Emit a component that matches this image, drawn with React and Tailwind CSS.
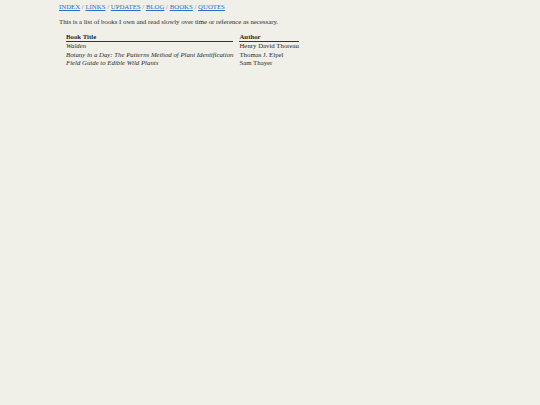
export default function App() {
  const books = [
    { title: "Walden", author: "Henry David Thoreau" },
    { title: "Botany in a Day: The Patterns Method of Plant Identification", author: "Thomas J. Elpel" },
    { title: "Field Guide to Edible Wild Plants", author: "Sam Thayer" },
  ];
  const links = ["INDEX", "LINKS", "UPDATES", "BLOG", "BOOKS", "QUOTES"];

  return (
    <div className="min-h-[405px] bg-[#f0f0e8] text-[#2a2a2a] font-['Liberation_Serif',serif] text-[6.8px] leading-[9px] pl-[59px] pt-[2px]">
      {/* Nav */}
      <nav className="text-[#777]">
        {links.map((l, i) => (
          <span key={l}>
            <a href="#" className="text-[#2a6fc9] underline">{l}</a>
            {i < links.length - 1 && " / "}
          </span>
        ))}
      </nav>

      <p className="mt-[6px]">This is a list of books I own and read slowly over time or reference as necessary.</p>

      {/* Books table */}
      <table className="ml-[1px] mt-[7px] border-separate border-spacing-x-[6px] border-spacing-y-0">
        <thead>
          <tr>
            <th className="text-left font-bold border-b-[1.5px] border-[#333] p-0 leading-[8px]">Book Title</th>
            <th className="text-left font-bold border-b-[1.5px] border-[#333] p-0 leading-[8px]">Author</th>
          </tr>
        </thead>
        <tbody>
          {books.map((b) => (
            <tr key={b.title}>
              <td className="italic p-0 leading-[8.6px]">{b.title}</td>
              <td className="p-0 leading-[8.6px]">{b.author}</td>
            </tr>
          ))}
        </tbody>
      </table>
    </div>
  );
}
